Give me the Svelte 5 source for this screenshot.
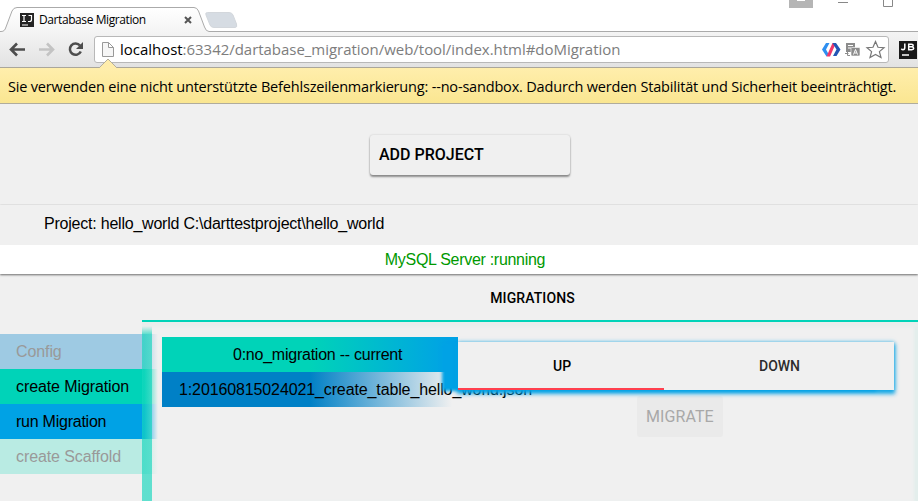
<script>
  const menu = [
    { label: 'Config', kind: 'config' },
    { label: 'create Migration', kind: 'create' },
    { label: 'run Migration', kind: 'run' },
    { label: 'create Scaffold', kind: 'scaffold' }
  ];
</script>

<div class="window">
  <header class="strip">
    <svg class="tabs" width="245" height="32" viewBox="0 0 245 32">
      <defs>
        <linearGradient id="tabfill" x1="0" y1="0" x2="0" y2="1">
          <stop offset="0" stop-color="#fff" /><stop offset="1" stop-color="#f4f4f4" />
        </linearGradient>
      </defs>
      <path d="M0 31.500H1C4 31.500 5 30 6 27L12 11Q13.500 7.500 17 7.500H194Q197 7.500 198.500 11L204.500 27Q206 31.500 209 31.500V32H0Z" fill="url(#tabfill)" />
      <path d="M0 31.500H1C4 31.500 5 30 6 27L12 11Q13.500 7.500 17 7.500H194Q197 7.500 198.500 11L204.500 27Q206 31.500 209 31.500H245" fill="none" stroke="#aaa" />
      <path d="M207.500 12.500H229Q232 12.500 233 15L236.500 24Q237.500 27.500 235 27.500H214Q211 27.500 210 25L206 15Q205 12.500 207.500 12.500Z" fill="#d6dce3" stroke="#d3d7dc" />
      <rect x="20" y="13" width="14" height="14" fill="#242424" />
      <path d="M22 15.500H26M24 15.500V21M22 21.500H26M28.500 15.500H31.500V19.500Q31.500 21.500 29.500 21.500H28M22 25H28" fill="none" stroke="#fff" stroke-width="1.200" />
      <path d="M185 17L191 23M191 17L185 23" stroke="#555" stroke-width="2" />
    </svg>
    <span class="title">Dartabase Migration</span>
    <svg class="controls" width="110" height="8" viewBox="0 0 110 8">
      <path d="M0 0H24V8H0Z" fill="#b5b5b5" /><path d="M8 0H16V1H8Z" fill="#fff" />
      <path d="M49 2.500H59" stroke="#888" /><path d="M94.500 0V6.500H103.500V0" fill="none" stroke="#888" />
    </svg>
  </header>
  <div class="toolbar">
    <svg width="94" height="36" viewBox="0 0 94 36">
      <path d="M25 17.500H12M17 11.500L11 17.500L17 23.500" fill="none" stroke="#4d4d4d" stroke-width="2.600" />
      <path d="M39 17.500H52M47 11.500L53 17.500L47 23.500" fill="none" stroke="#c3c3c3" stroke-width="2.600" />
      <path d="M80 13.500A5.700 5.700 0 1 0 80.800 19.500" fill="none" stroke="#4d4d4d" stroke-width="2.500" />
      <path d="M83 10V17H76Z" fill="#4d4d4d" />
    </svg>
    <div class="address">
      <svg width="24" height="26" viewBox="0 0 24 26">
        <path d="M7.500 5.500H13.500L18.500 10.500V19.500H7.500ZM13.500 5.500V10.500H18.500" fill="#f6f6f6" stroke="#999" />
      </svg>
      <span class="url"><b>localhost</b>:63342/dartabase_migration/web/tool/index.html#doMigration</span>
      <svg class="actions" width="68" height="26" viewBox="0 0 68 26">
        <path d="M2 12.500L6 6H9.500L6 12.500L8.500 17L6.500 19.500Z" fill="#2f8ff0" />
        <path d="M6.500 19.500L12.500 6H16L10 19.500Z" fill="#f0386b" />
        <path d="M12.500 6H16L20.500 12.500L16.500 19H13L16.500 12.500L14 8.500Z" fill="#2456b5" />
        <rect x="26" y="6" width="9" height="9" fill="#8c8c8c" /><rect x="31" y="10.500" width="9" height="8.500" rx="1" fill="#8c8c8c" stroke="#fff" stroke-width=".6" />
        <path d="M28 8.500H33M28 11H31" fill="none" stroke="#fff" />
        <path d="M33.500 17.500L35.500 12.500L37.500 17.500M34.500 16H36.500" fill="none" stroke="#fff" />
        <path d="M25 16.500H28.500M27.500 15V18.500H30" fill="none" stroke="#8c8c8c" />
        <path d="M55.500 4.500L58 10.300L64 10.700L59.400 14.600L61 20.500L55.500 17.400L50 20.500L51.600 14.600L47 10.700L53 10.300Z" fill="#fff" stroke="#777" stroke-width="1.200" />
      </svg>
    </div>
    <svg class="jb" width="18" height="18" viewBox="0 0 18 18">
      <rect width="18" height="18" fill="#191919" />
      <path d="M5.800 2.500V6.500Q5.800 8.700 4 8.700Q3 8.700 2.300 7.800M9.700 3.200H12.500Q14.200 3.200 14.200 4.500T12.500 5.800H9.700H12.800Q14.700 5.900 14.700 7.300T12.800 8.800H9.700Z" fill="none" stroke="#fff" stroke-width="1.500" />
      <path d="M3 14H10" stroke="#fff" stroke-width="1.500" />
    </svg>
  </div>
  <div class="infobar">
    <svg class="notch" width="20" height="10" viewBox="0 0 20 10"><path d="M1 10L10 1L19 10" fill="#ffedab" stroke="#b3ae9c" /></svg>
    <span>Sie verwenden eine nicht unterstützte Befehlszeilenmarkierung: --no-sandbox. Dadurch werden Stabilität und Sicherheit beeinträchtigt.</span>
  </div>

  <main>
    <button class="add"><span>ADD PROJECT</span></button>
    <section class="project">
      <div class="path"><span>Project: hello_world C:\darttestproject\hello_world</span></div>
      <div class="server"><span>MySQL Server :running</span></div>
    </section>
    <h1><span>MIGRATIONS</span></h1>
    <div class="body">
      <nav>
        {#each menu as item}
          <div class="item {item.kind}"><span>{item.label}</span></div>
        {/each}
      </nav>
      <div class="panel">
        <div class="rail"></div>
        <div class="list">
          <div class="row current"><span>0:no_migration -- current</span></div>
          <div class="row next"><span>1:20160815024021_create_table_hello_world.json</span></div>
        </div>
        <div class="side">
          <div class="direction">
            <div class="tab active"><span>UP</span></div>
            <div class="tab down"><span>DOWN</span></div>
          </div>
          <button class="migrate"><span>MIGRATE</span></button>
        </div>
      </div>
    </div>
  </main>
</div>

<style>
  :global(body) { margin: 0; overflow: hidden; }
  * { box-sizing: border-box; }
  span { white-space: nowrap; }
  svg { display: block; flex: none; }
  button { border: 0; margin: 0; padding: 0; text-align: left; }
  .window { width: 918px; height: 501px; overflow: hidden; display: flex; flex-direction: column; background: #f0f0f0; color: #000; font-family: "Liberation Sans", Arial, sans-serif; font-size: 16px; }
  .strip { position: relative; height: 32px; flex: none; background: linear-gradient(#aaa, #aaa) 209px 31px / 709px 1px no-repeat #fff; }
  .title { position: absolute; left: 39px; top: 12px; font: 12px/16px "Open Sans", sans-serif; letter-spacing: -.41px; }
  .controls { position: absolute; left: 789px; top: 0; }
  .toolbar { height: 35px; flex: none; display: flex; align-items: flex-start; background: linear-gradient(#f4f4f4, #e2e2e2); }
  .address { width: 795px; height: 27px; margin-top: 4px; display: flex; align-items: center; background: #fff; border: 1px solid #b8b8b8; border-radius: 3px; }
  .url { font: 15px/24px "Open Sans", sans-serif; color: #7d7d7d; letter-spacing: -.03px; margin-left: 1px; position: relative; top: -1px; }
  .url b { font-weight: 400; color: #000; }
  .actions { margin-left: auto; }
  .jb { margin: 9px 0 0 10px; }
  .infobar { position: relative; height: 37px; flex: none; padding-left: 8px; background: linear-gradient(#ffeeac, #fae691); border-top: 1px solid #aaa69a; border-bottom: 1px solid #b0ac9c; font: 14.5px/37px "Open Sans", sans-serif; letter-spacing: -.18px; }
  .notch { position: absolute; left: 98px; top: -10px; }
  main { flex: 1; display: flex; flex-direction: column; min-height: 0; }
  .add { width: 200px; height: 40px; flex: none; margin: 31px 0 30px 370px; padding-left: 9px; background: #f0f0f0; border-radius: 3px; box-shadow: 0 2px 2px rgba(0,0,0,.4), 0 0 2px rgba(0,0,0,.18); font: 500 16px/40px Roboto, sans-serif; color: #000; }
  .project { height: 69px; flex: none; box-shadow: 0 1px 2px rgba(0,0,0,.55), 0 -1px 2px rgba(0,0,0,.04); clip-path: inset(-1px 0 -4px 0); }
  .path { height: 40px; padding-left: 44px; line-height: 37px; letter-spacing: -.22px; background: #f0f0f0; }
  .server { height: 29px; background: #fff; color: #090; text-align: center; line-height: 29px; padding-left: 12px; letter-spacing: -.3px; }
  h1 { margin: 0; height: 46px; flex: none; font: 500 14px/49px Roboto, sans-serif; letter-spacing: .1px; text-align: center; padding-left: 147px; }
  .body { flex: 1; display: flex; min-height: 0; }
  nav { width: 142px; padding-top: 14px; flex: none; }
  .item { width: 158px; height: 35px; padding-left: 16px; line-height: 35px; letter-spacing: -.1px; }
  .config { background: linear-gradient(90deg, #9ecae3 142px, transparent); color: #999; }
  .create { background: linear-gradient(90deg, #00d3b8 142px, transparent); }
  .run { background: linear-gradient(90deg, #00a2e5 142px, transparent); letter-spacing: -.24px; }
  .scaffold { background: linear-gradient(90deg, #b9ebe3 142px, transparent); color: #999; }
  .panel { position: relative; flex: 1; display: flex; border-top: 2px solid #00d3b8; box-shadow: inset 0 6px 3px -1px #e9eeed, inset -5px 0 3px -1px #e3eeec; }
  .rail { width: 10px; margin-top: 4px; background: linear-gradient(transparent, rgba(0,212,184,.6) 8px); flex: none; }
  .list { width: 296px; margin: 15px 0 0 10px; flex: none; }
  .row { height: 35px; line-height: 35px; display: flex; }
  .current { background: linear-gradient(90deg, #00d3b8 50%, #00a2e5 97%); padding-left: 71px; letter-spacing: -.24px; }
  .next { background: linear-gradient(90deg, #0080c6 50%, #f0f0f0 98%); padding-left: 17px; letter-spacing: -.12px; }
  .side { width: 436px; padding-top: 20px; }
  .direction { position: relative; display: flex; height: 48px; background: #f0f0f0; box-shadow: 0 3px 4px 1px rgba(0,162,229,.88), 0 0 4px rgba(0,162,229,.6), -17px 2px 3px -1px #00a2e5; clip-path: inset(-6px -8px -10px -24px); font: 500 14px/48px Roboto, sans-serif; }
  .tab { width: 206px; padding-left: 95px; }
  .active { border-bottom: 2px solid #ff404e; }
  .down { color: #2c2c2c; }
  .migrate { display: block; margin: 6px 0 0 179px; width: 86px; height: 41px; border-radius: 3px; background: #eaeaea; color: #a8a8a8; padding-left: 9px; font: 400 16px/41px Roboto, sans-serif; letter-spacing: .08px; }
</style>
